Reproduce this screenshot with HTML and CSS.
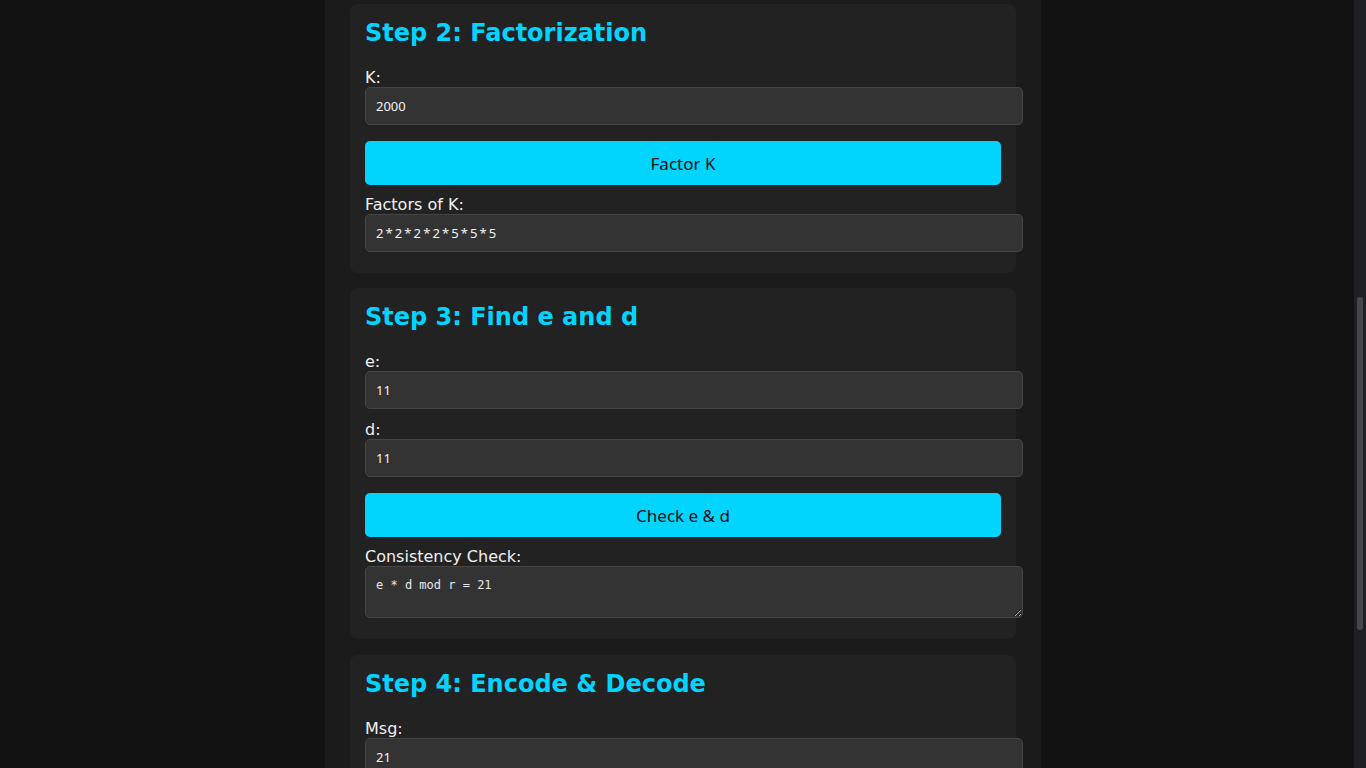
FILE: index.html
```html
<!DOCTYPE html>
<html lang="en">
<head>
<meta charset="utf-8">
<title>RSA Steps</title>
<link rel="stylesheet" href="styles.css">
</head>
<body>
<main class="container">
  <section class="card">
    <h2>Step 2: Factorization</h2>
    <label class="lbl" for="k">K:</label>
    <input class="field" id="k" type="text" value="2000">
    <button class="btn" type="button">Factor K</button>
    <label class="lbl" for="fk">Factors of K:</label>
    <input class="field spaced" id="fk" type="text" value="2*2*2*2*5*5*5">
  </section>
  <section class="card">
    <h2>Step 3: Find e and d</h2>
    <label class="lbl" for="e">e:</label>
    <input class="field" id="e" type="text" value="11">
    <label class="lbl" for="d">d:</label>
    <input class="field" id="d" type="text" value="11">
    <button class="btn" type="button">Check e &amp; d</button>
    <label class="lbl" for="cc">Consistency Check:</label>
    <textarea class="area" id="cc">e * d mod r = 21</textarea>
  </section>
  <section class="card">
    <h2>Step 4: Encode &amp; Decode</h2>
    <label class="lbl" for="msg">Msg:</label>
    <input class="field" id="msg" type="text" value="21">
  </section>
</main>
<div class="scrollbar"><div class="thumb"></div></div>
</body>
</html>
```
FILE: styles.css
```css
html, body {
  margin: 0;
  height: 100%;
  overflow: hidden;
}
body {
  background: #121212;
  font-family: "DejaVu Sans", sans-serif;
  color: #f0f0f0;
}
.container {
  width: 666px;
  min-height: 100%;
  margin: 0 auto;
  padding: 4px 25px 0;
  background: #1b1b1b;
}
.card {
  background: #222222;
  border-radius: 8px;
  padding: 15px 15px 10px;
  margin-bottom: 15px;
}
.card + .card + .card {
  margin-top: 16px;
}
.card h2 {
  margin: 0 0 21px;
  font-size: 24px;
  line-height: 28px;
  font-weight: bold;
  color: #00d4ff;
}
.lbl {
  display: block;
  font-size: 16px;
  line-height: 19px;
  color: #f0f0f0;
}
.field {
  display: block;
  width: 636px;
  box-sizing: content-box;
  height: 16px;
  padding: 10px;
  margin: 0 0 11px;
  background: #333333;
  border: 1px solid #454545;
  border-radius: 5px;
  color: #f2f2f2;
  font-family: "Noto Sans", sans-serif;
  font-size: 13px;
  line-height: 16px;
  outline: none;
}
.spaced {
  letter-spacing: 2.1px;
}
.btn {
  display: block;
  width: 636px;
  height: 44px;
  margin: 16px 0 10px;
  padding: 0;
  border: none;
  border-radius: 5px;
  background: #00d4ff;
  color: #111;
  font-family: "Noto Sans", sans-serif;
  font-size: 17px;
  cursor: pointer;
}
.area {
  display: block;
  width: 636px;
  height: 30px;
  padding: 10px;
  margin: 0 0 11px;
  background: #333333;
  border: 1px solid #454545;
  border-radius: 5px;
  color: #e8e8e8;
  font-family: "DejaVu Sans Mono", monospace;
  font-size: 12px;
  line-height: 16px;
  outline: none;
}
.scrollbar {
  position: fixed;
  top: 0;
  right: 0;
  width: 12px;
  height: 100%;
  background: #1e2026;
}
.thumb {
  position: absolute;
  left: 3px;
  top: 297px;
  width: 6px;
  height: 333px;
  border-radius: 3px;
  background: #46474d;
}
```
